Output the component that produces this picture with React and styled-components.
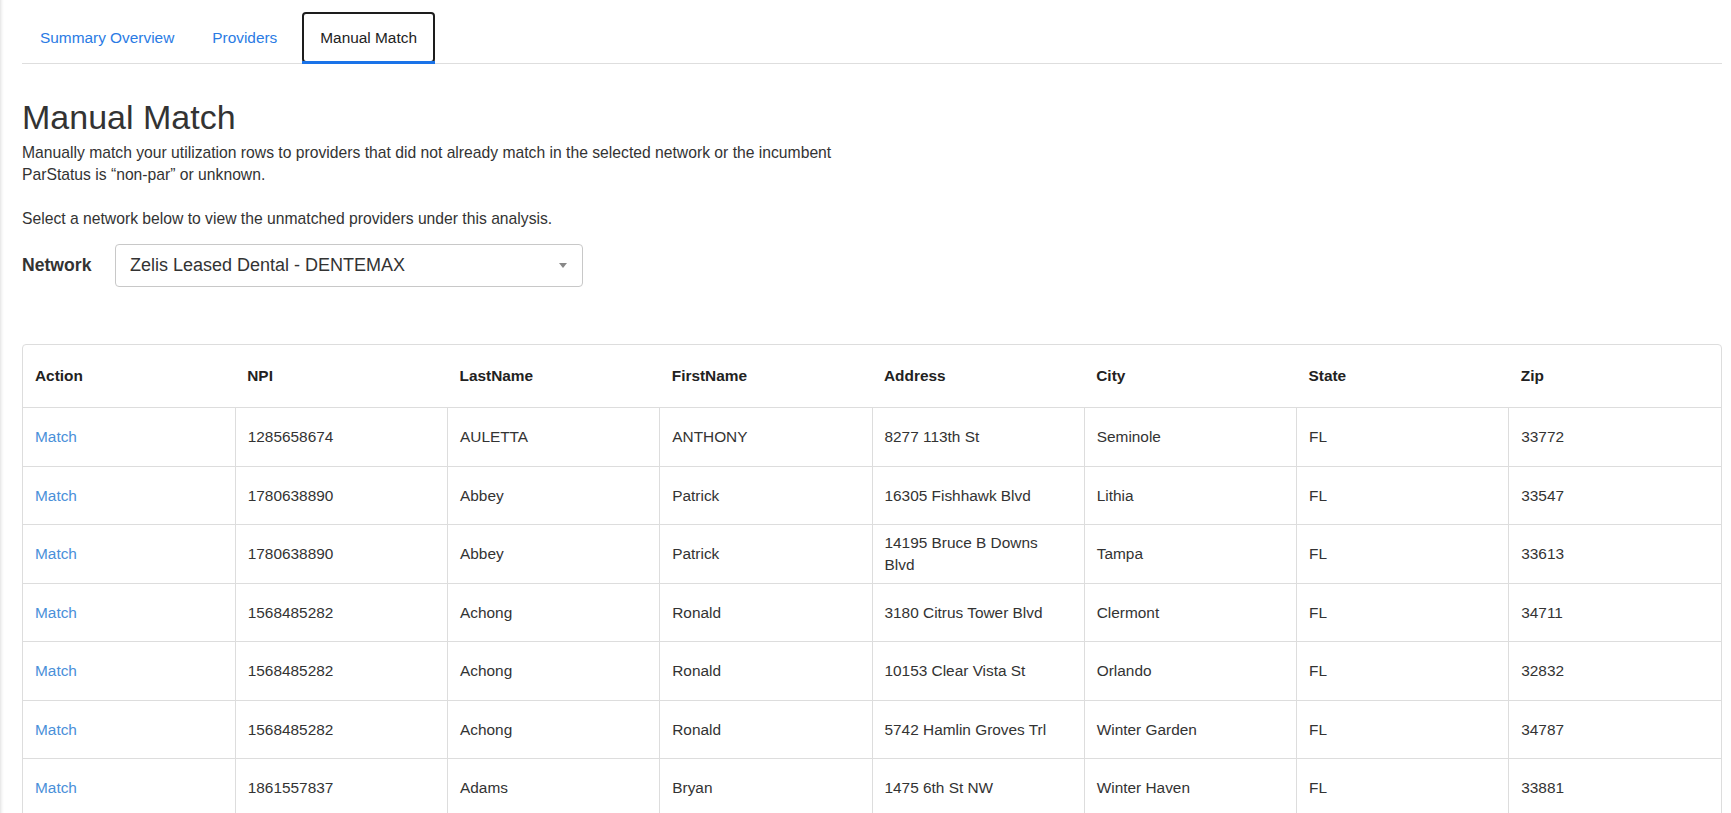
import React from 'react'
import styled, { createGlobalStyle } from 'styled-components'

const GlobalStyle = createGlobalStyle`
html, body {
  margin: 0;
  padding: 0;
  overflow: hidden;
  background: #fff;
}
body {
  font-family: "Liberation Sans", Arial, sans-serif;
  color: #333;
}
`

const Page = styled.div`
min-height: 813px;
padding: 0 9px 0 22px;
background: linear-gradient(to right, #e6e6e6 0, #f7f7f7 2px, #fff 4px);
`

const TabBar = styled.div`
display: flex;
align-items: flex-end;
padding: 12px 0 0 5px;
border-bottom: 1px solid #dedede;
`

const Tab = styled.div`
position: relative;
height: 51px;
box-sizing: border-box;
display: flex;
align-items: center;
padding: 0 ${p => (p.active ? 16 : 11)}px;
margin-right: 12px;
font-size: 15.4px;
border: 2px solid ${p => (p.active ? '#1d1d1d' : 'transparent')};
border-radius: 4px;
color: ${p => (p.active ? '#222' : '#2a7be4')};
cursor: pointer;
&::after {
  content: '';
  display: ${p => (p.active ? 'block' : 'none')};
  position: absolute;
  left: -2px;
  right: -2px;
  bottom: -3px;
  height: 3px;
  background: #1a73e8;
}
`

const Title = styled.h1`
margin: 35px 0 0;
font-size: 34px;
line-height: 1.1;
font-weight: 400;
color: #333;
`

const Intro = styled.p`
margin: 6px 0 22px;
max-width: 840px;
font-size: 15.7px;
line-height: 22px;
`

const Hint = styled.p`
margin: 0;
font-size: 15.7px;
line-height: 22px;
`

const FieldRow = styled.div`
display: flex;
align-items: center;
margin-top: 14px;
`

const Label = styled.label`
font-size: 17.6px;
font-weight: 700;
color: #333;
width: 93px;
`

const Select = styled.div`
position: relative;
width: 468px;
height: 43px;
box-sizing: border-box;
display: flex;
align-items: center;
padding-left: 14px;
border: 1px solid #c8c8c8;
border-radius: 4px;
font-size: 18px;
color: #333;
&::after {
  content: '';
  position: absolute;
  right: 15px;
  top: 18px;
  border-left: 4px solid transparent;
  border-right: 4px solid transparent;
  border-top: 5px solid #888;
}
`

const TableWrap = styled.div`
margin-top: 57px;
border: 1px solid #ddd;
border-radius: 4px;
overflow: hidden;
`

const Table = styled.table`
width: 100%;
table-layout: fixed;
border-collapse: collapse;
font-size: 15.4px;
line-height: 22px;
`

const Th = styled.th`
height: 62px;
padding: 0 12px;
text-align: left;
font-weight: 700;
color: #222;
border-bottom: 1px solid #ddd;
`

const Td = styled.td`
height: 57.5px;
padding: 0 12px;
color: #333;
border-bottom: 1px solid #ddd;
border-left: 1px solid #ddd;
&:first-child {
  border-left: none;
}
`

const MatchLink = styled.a`
color: #4a90d9;
text-decoration: none;
cursor: pointer;
`

const columns = ['Action', 'NPI', 'LastName', 'FirstName', 'Address', 'City', 'State', 'Zip']

const rows = [
  ['1285658674', 'AULETTA', 'ANTHONY', '8277 113th St', 'Seminole', 'FL', '33772'],
  ['1780638890', 'Abbey', 'Patrick', '16305 Fishhawk Blvd', 'Lithia', 'FL', '33547'],
  ['1780638890', 'Abbey', 'Patrick', '14195 Bruce B Downs Blvd', 'Tampa', 'FL', '33613'],
  ['1568485282', 'Achong', 'Ronald', '3180 Citrus Tower Blvd', 'Clermont', 'FL', '34711'],
  ['1568485282', 'Achong', 'Ronald', '10153 Clear Vista St', 'Orlando', 'FL', '32832'],
  ['1568485282', 'Achong', 'Ronald', '5742 Hamlin Groves Trl', 'Winter Garden', 'FL', '34787'],
  ['1861557837', 'Adams', 'Bryan', '1475 6th St NW', 'Winter Haven', 'FL', '33881'],
]

const App = () => {
  return (
    <Page>
      <GlobalStyle />
      <TabBar>
        <Tab>Summary Overview</Tab>
        <Tab>Providers</Tab>
        <Tab active>Manual Match</Tab>
      </TabBar>

      <Title>Manual Match</Title>
      <Intro>
        Manually match your utilization rows to providers that did not already match in the selected network or the incumbent ParStatus is “non-par” or unknown.
      </Intro>
      <Hint>Select a network below to view the unmatched providers under this analysis.</Hint>

      <FieldRow>
        <Label>Network</Label>
        <Select>Zelis Leased Dental - DENTEMAX</Select>
      </FieldRow>

      <TableWrap>
        <Table>
          <thead>
            <tr>
              {columns.map(c => <Th key={c}>{c}</Th>)}
            </tr>
          </thead>
          <tbody>
            {rows.map((r, i) => (
              <tr key={i}>
                <Td><MatchLink>Match</MatchLink></Td>
                {r.map((v, j) => <Td key={j}>{v}</Td>)}
              </tr>
            ))}
          </tbody>
        </Table>
      </TableWrap>
    </Page>
  )
}

export default App
